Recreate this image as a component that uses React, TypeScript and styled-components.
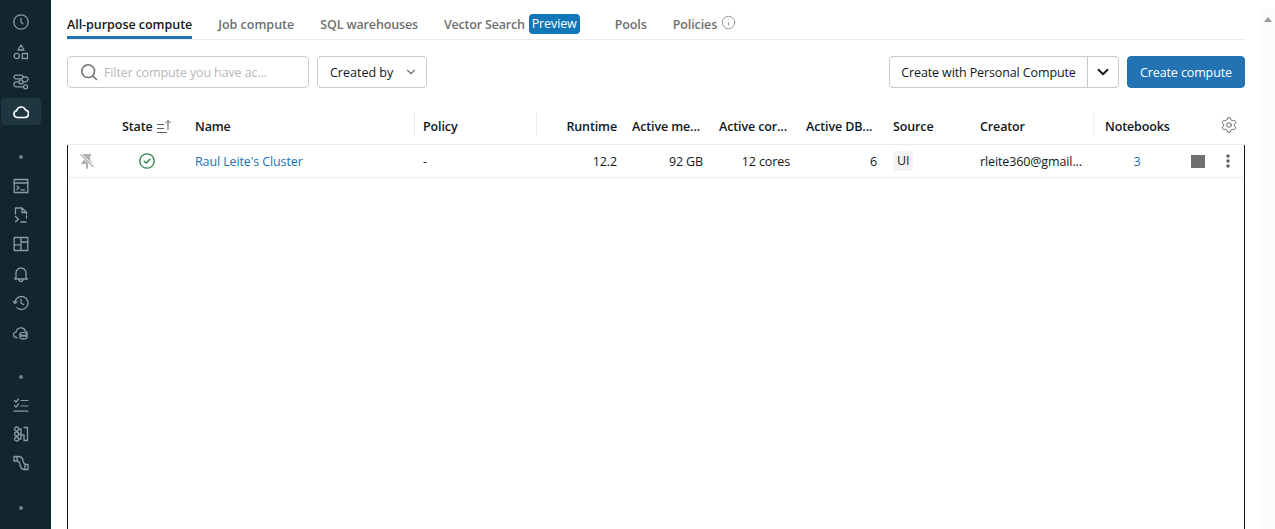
import React from "react";
import styled, {createGlobalStyle} from "styled-components";
import {ChevronDown, Info, Settings} from "lucide-react";

const GlobalStyle = createGlobalStyle`
    html, body {
        margin: 0;
        height: 100%;
        overflow: hidden;
        background: #fff;
    }
    body {
        font-family: "Open Sans", "Noto Sans", sans-serif;
        font-size: 12.5px;
        letter-spacing: -0.12px;
        color: #11171c;
    }
`;

const Page = styled.div`
    display: flex;
    height: 529px;
    width: 1275px;
    overflow: hidden;
`;

const Sidebar = styled.nav`
    width: 51px;
    flex: none;
    background: #13262e;
    display: flex;
    flex-direction: column;
    padding: 8px 10px 0 1px;
    box-sizing: border-box;
`;

const NavGroup = styled.div<{ $gap: number }>`
    display: flex;
    flex-direction: column;
    gap: ${p => p.$gap}px;
    flex: none;
`;

const NavItem = styled.div<{ $active?: boolean }>`
    height: 27px;
    flex: none;
    display: flex;
    align-items: center;
    justify-content: center;
    border-radius: 4px;
    color: ${p => p.$active ? "#fff" : "#8d9ca3"};
    background: ${p => p.$active ? "#1f3640" : "transparent"};
`;

const NavDot = styled.div<{ $top: number; $bottom: number }>`
    width: 4px;
    height: 4px;
    border-radius: 50%;
    background: #6f8089;
    flex: none;
    align-self: center;
    margin: ${p => p.$top}px 0 ${p => p.$bottom}px;
`;

const Main = styled.main`
    flex: 1;
    min-width: 0;
    display: flex;
    flex-direction: column;
    padding: 0 16px;
`;

const Tabs = styled.div`
    display: flex;
    gap: 26px;
    height: 40px;
    box-sizing: border-box;
    padding-top: 15px;
    border-bottom: 1px solid #e8ecf0;
    flex: none;
`;

const Tab = styled.div<{ $active?: boolean; $spacing?: number }>`
    height: 24px;
    box-sizing: border-box;
    display: flex;
    align-items: flex-start;
    gap: 4px;
    font-weight: 600;
    line-height: 19px;
    letter-spacing: ${p => p.$spacing ?? 0}px;
    color: ${p => p.$active ? "#11171c" : "#6f6f6f"};
    border-bottom: ${p => p.$active ? "3px solid #2272b4" : "none"};
`;

const PreviewBadge = styled.span`
    background: #1177b8;
    color: #fff;
    font-weight: 400;
    letter-spacing: -0.1px;
    border-radius: 4px;
    padding: 0 3px;
    height: 20px;
    line-height: 20px;
    margin-top: -1px;
    margin-right: 9px;
`;

const TabInfo = styled.span`
    display: flex;
    color: #7a7a7a;
`;

const Toolbar = styled.div`
    display: flex;
    align-items: center;
    gap: 8px;
    margin-top: 16px;
    height: 32px;
    flex: none;
`;

const SearchBox = styled.div`
    width: 242px;
    height: 32px;
    box-sizing: border-box;
    border: 1px solid #cbcbcb;
    border-radius: 4px;
    display: flex;
    align-items: center;
    gap: 6px;
    padding-left: 12px;
    color: #6f6f6f;
`;

const Placeholder = styled.span`
    color: #b8b8b8;
    white-space: nowrap;
`;

const Button = styled.button<{ $primary?: boolean }>`
    font: inherit;
    letter-spacing: inherit;
    height: 32px;
    box-sizing: border-box;
    border-radius: 4px;
    border: 1px solid ${p => p.$primary ? "#2272b4" : "#cbcbcb"};
    background: ${p => p.$primary ? "#2272b4" : "#fff"};
    color: ${p => p.$primary ? "#fff" : "#11171c"};
    padding: 0;
    display: flex;
    align-items: center;
    justify-content: center;
    flex: none;
`;

const FilterButton = styled(Button)`
    width: 110px;
    gap: 11px;
    letter-spacing: 0;
    justify-content: flex-start;
    padding-left: 12px;
`;

const Spacer = styled.div`
    flex: 1;
`;

const SplitGroup = styled.div`
    display: flex;
`;

const SplitMain = styled(Button)`
    width: 199px;
    border-radius: 4px 0 0 4px;
`;

const SplitCaret = styled(Button)`
    width: 32px;
    margin-left: -1px;
    border-radius: 0 4px 4px 0;
`;

const PrimaryButton = styled(Button)`
    width: 118px;
`;

const COLUMNS = "46px 73px 228px 122px 87px 87px 87px 87px 87px 122px 81px 1fr";

const HeaderRow = styled.div`
    display: grid;
    grid-template-columns: ${COLUMNS};
    margin-top: 24px;
    height: 33px;
    box-sizing: border-box;
    padding-left: 1px;
    padding-right: 1px;
    border-bottom: 1px solid #e8ecf0;
    flex: none;
`;

const HeaderCell = styled.div<{ $divider?: boolean; $right?: boolean; $pad?: number; $endPad?: number }>`
    height: 24px;
    box-sizing: border-box;
    display: flex;
    align-items: center;
    justify-content: ${p => p.$right ? "flex-end" : "flex-start"};
    padding: 5px ${p => p.$endPad ?? 8}px 0 ${p => p.$pad ?? 8}px;
    gap: 4px;
    font-weight: 600;
    white-space: nowrap;
    border-right: ${p => p.$divider ? "1px solid #e8ecf0" : "none"};
`;

const GearCell = styled.div`
    display: flex;
    justify-content: flex-end;
    padding: 2px 6px 0 0;
    height: 24px;
    box-sizing: border-box;
    align-items: center;
    color: #5f5f5f;
`;

const TableBody = styled.div`
    flex: 1;
    border-left: 1px solid #11171c;
    border-right: 1px solid #11171c;
`;

const BodyRow = styled.div`
    display: grid;
    grid-template-columns: ${COLUMNS};
    height: 33px;
    box-sizing: border-box;
    border-bottom: 1px solid #e8ecf0;
    align-items: center;
`;

const Cell = styled.div<{ $right?: boolean; $endPad?: number }>`
    padding: 0 ${p => p.$endPad ?? 8}px 0 8px;
    text-align: ${p => p.$right ? "right" : "left"};
    white-space: nowrap;
`;

const IconCell = styled.div<{ $pad: number }>`
    display: flex;
    align-items: center;
    padding-left: ${p => p.$pad}px;
`;

const ClusterLink = styled.span`
    color: #2272b4;
`;

const SourceTag = styled.span`
    display: inline-block;
    background: #f3f3f3;
    border-radius: 4px;
    padding: 0 4px;
    line-height: 20px;
`;

const NotebookCount = styled.div`
    color: #2272b4;
    text-align: center;
    padding-left: 5px;
`;

const Actions = styled.div`
    display: flex;
    align-items: center;
    justify-content: flex-end;
    gap: 21px;
    padding-right: 14px;
    color: #5f5f5f;
`;

const StopSquare = styled.div`
    width: 14px;
    height: 13px;
    background: #6f6f6f;
`;

const Scrollbar = styled.div`
    width: 14px;
    flex: none;
    background: #fbfbfb;
    margin-top: 8px;
    display: flex;
    justify-content: center;
    padding-top: 9px;
    box-sizing: border-box;
`;

const ScrollArrow = styled.div`
    width: 0;
    height: 0;
    border-left: 4.5px solid transparent;
    border-right: 4.5px solid transparent;
    border-bottom: 5px solid #9a9a9a;
`;

type IconProps = { children: React.ReactNode; sw?: number };

function Ico({children, sw = 1.3}: IconProps) {
    return <svg width="16" height="16" viewBox="0 0 16 16" fill="none" stroke="currentColor"
                strokeWidth={sw} strokeLinecap="round" strokeLinejoin="round">{children}</svg>;
}

const NAV_TOP = [
    <Ico><circle cx="8" cy="8" r="7.2"/><path d="M8 4.5V8l1.8 1.8"/></Ico>,
    <Ico><path d="M8 1 L11 6 H5 Z"/><circle cx="3.8" cy="12" r="2.6"/><rect x="9.3" y="9.5" width="5.2" height="5"/></Ico>,
    <Ico><rect x="1" y="1.2" width="9" height="3.6" rx="1.8"/><path d="M10 3h3.2a2 2 0 0 1 1.3 3.4A2 2 0 0 1 13 7.9H10M6 7.9H3a2 2 0 0 0-2 2 2.4 2.4 0 0 0 2 2.9h7.4"/><circle cx="8" cy="7.9" r="2"/><circle cx="12.6" cy="12.8" r="2"/></Ico>,
    <Ico sw={1.6}><path d="M4.2 13.5a3.5 3.5 0 0 1-.5-6.9 4.6 4.6 0 0 1 8.8-.6 3.8 3.8 0 0 1-.2 7.5Z"/></Ico>,
];

const NAV_MID = [
    <Ico><rect x="1.2" y="1.5" width="13.6" height="13"/><path d="M1.2 5h13.6M4 8.2l2 1.8-2 1.6M8 11.8h3.5"/></Ico>,
    <Ico><path d="M2.5 7V1h6.5l4.5 4.500V7M9 1v4.500h4.500M2.500 9.500l3 2.700-3 2.600M8 15h5M13.500 9v2"/></Ico>,
    <Ico><rect x="1.2" y="1.5" width="13.6" height="13"/><path d="M8 1.500v13M1.200 8.800H8M8 6h6.800"/></Ico>,
    <Ico><path d="M3 11.500V7a5 5 0 0 1 10 0v4.500l1.300 1.500H1.700Z"/><path d="M6 13.500a2 2 0 0 0 4 0"/></Ico>,
    <Ico><path d="M2 8a6.500 6.500 0 1 1 1.900 4.600"/><path d="M.5 6.500 2 8.300l2-1.500"/><path d="M8 4.500V8l2.500 1.600"/></Ico>,
    <Ico><path d="M4 13.500H3.500a2.800 2.800 0 0 1-.3-5.600 4.800 4.800 0 0 1 9.200-1l1.800 2"/><ellipse cx="10.500" cy="9.800" rx="3.500" ry="1.500"/><path d="M7 9.800v3.700c0 .8 1.500 1.500 3.500 1.500s3.500-.7 3.500-1.500V9.800M7 12h7"/></Ico>,
];

const NAV_BOTTOM = [
    <Ico sw={1.2}><path d="M1.500 3.500 3 5l2.500-3M1.500 8.500 3 10l2.500-3M1 14.200h14M8 3.500h7M8 9h7"/></Ico>,
    <Ico sw={1.3}><circle cx="3.600" cy="3" r="2"/><circle cx="3.600" cy="8" r="2"/><circle cx="3.600" cy="13" r="2"/><path d="M5.600 3H8v10H5.600M5.600 8H8M11 1.500h3.500v13H11V9H8.800"/></Ico>,
    <Ico><path d="M1 1.500H5.500C8.500 1.500 9.800 3.500 10.200 6 10.500 8.500 11.500 9.500 13 9.500H15v5H11.500C8.500 14.500 7.500 12.500 7 10 6.700 7.800 5.800 6 4 6H1ZM4 1.500V6M12 9.500v5"/></Ico>,
];

function PinOffIcon() {
    return <svg width="16" height="16" viewBox="0 0 16 16" fill="#b0b0b0" stroke="none">
        <path d="M4 1h8v1.500l-1 1v3.500l2 2.500V11H9v4.500l-1 .5-1-.5V11H2.500V9.500L5 7V3.500l-1-1Z"/>
        <path d="M2 2l12.500 11.500" stroke="#fff" strokeWidth="2.400"/>
        <path d="M1.500 1.500l13 12.500" stroke="#b0b0b0" strokeWidth="1.100"/>
    </svg>;
}

function SortIcon() {
    return <svg width="16" height="16" viewBox="0 0 16 16" fill="none" stroke="#5f5f5f" strokeWidth="1">
        <path d="M0 5.500h7M0 9.500h7M0 13.500h10M11 11V1.500M8.500 4 11 1.500 13.500 4"/>
    </svg>;
}

function RunningIcon() {
    return <svg width="16" height="16" viewBox="0 0 16 16" fill="none" stroke="#277c43" strokeWidth="1.300"
                strokeLinecap="round" strokeLinejoin="round">
        <circle cx="8" cy="8" r="7.200"/>
        <path d="M5.200 8.200 7.200 10 10.800 6.200"/>
    </svg>;
}

function SearchIcon() {
    return <svg width="18" height="18" viewBox="0 0 18 18" fill="none" stroke="currentColor" strokeWidth="1.500"
                strokeLinecap="round">
        <circle cx="8.200" cy="8.200" r="6.400"/>
        <path d="M13 13l3.500 3.500"/>
    </svg>;
}

function KebabIcon() {
    return <svg width="4" height="14" viewBox="0 0 4 14" fill="currentColor">
        <circle cx="2" cy="2" r="1.700"/>
        <circle cx="2" cy="7" r="1.700"/>
        <circle cx="2" cy="12" r="1.700"/>
    </svg>;
}

export default function App() {
    return <Page>
        <GlobalStyle/>
        <Sidebar>
            <NavGroup $gap={3}>
                {NAV_TOP.map((icon, i) => <NavItem key={i} $active={i === 3}>{icon}</NavItem>)}
            </NavGroup>
            <NavDot $top={30} $bottom={13.5}/>
            <NavGroup $gap={2.2}>
                {NAV_MID.map((icon, i) => <NavItem key={i}>{icon}</NavItem>)}
            </NavGroup>
            <NavDot $top={30} $bottom={12.5}/>
            <NavGroup $gap={2}>
                {NAV_BOTTOM.map((icon, i) => <NavItem key={i}>{icon}</NavItem>)}
            </NavGroup>
            <NavDot $top={29} $bottom={0}/>
        </Sidebar>
        <Main>
            <Tabs>
                <Tab $active $spacing={-0.04}>All-purpose compute</Tab>
                <Tab>Job compute</Tab>
                <Tab $spacing={-0.14}>SQL warehouses</Tab>
                <Tab $spacing={-0.2}>Vector Search <PreviewBadge>Preview</PreviewBadge></Tab>
                <Tab $spacing={-0.1}>Pools</Tab>
                <Tab $spacing={-0.1}>Policies <TabInfo><Info size={15} strokeWidth={1.2}/></TabInfo></Tab>
            </Tabs>
            <Toolbar>
                <SearchBox><SearchIcon/><Placeholder>Filter compute you have ac...</Placeholder></SearchBox>
                <FilterButton>Created by <ChevronDown size={14} color="#6f6f6f"/></FilterButton>
                <Spacer/>
                <SplitGroup>
                    <SplitMain>Create with Personal Compute</SplitMain>
                    <SplitCaret><ChevronDown size={18} strokeWidth={2.4}/></SplitCaret>
                </SplitGroup>
                <PrimaryButton $primary>Create compute</PrimaryButton>
            </Toolbar>
            <HeaderRow>
                <HeaderCell/>
                <HeaderCell>State <SortIcon/></HeaderCell>
                <HeaderCell $divider>Name</HeaderCell>
                <HeaderCell $divider>Policy</HeaderCell>
                <HeaderCell $right $endPad={7}>Runtime</HeaderCell>
                <HeaderCell>Active me...</HeaderCell>
                <HeaderCell>Active cor...</HeaderCell>
                <HeaderCell>Active DB...</HeaderCell>
                <HeaderCell>Source</HeaderCell>
                <HeaderCell $divider>Creator</HeaderCell>
                <HeaderCell $pad={11}>Notebooks</HeaderCell>
                <GearCell><Settings size={18} strokeWidth={1.3}/></GearCell>
            </HeaderRow>
            <TableBody>
                <BodyRow>
                    <IconCell $pad={11}><PinOffIcon/></IconCell>
                    <IconCell $pad={25}><RunningIcon/></IconCell>
                    <Cell><ClusterLink>Raul Leite's Cluster</ClusterLink></Cell>
                    <Cell>-</Cell>
                    <Cell $right $endPad={7}>12.2</Cell>
                    <Cell $right>92 GB</Cell>
                    <Cell $right>12 cores</Cell>
                    <Cell $right>6</Cell>
                    <Cell><SourceTag>UI</SourceTag></Cell>
                    <Cell>rleite360@gmail...</Cell>
                    <NotebookCount>3</NotebookCount>
                    <Actions><StopSquare/><KebabIcon/></Actions>
                </BodyRow>
            </TableBody>
        </Main>
        <Scrollbar><ScrollArrow/></Scrollbar>
    </Page>;
}
